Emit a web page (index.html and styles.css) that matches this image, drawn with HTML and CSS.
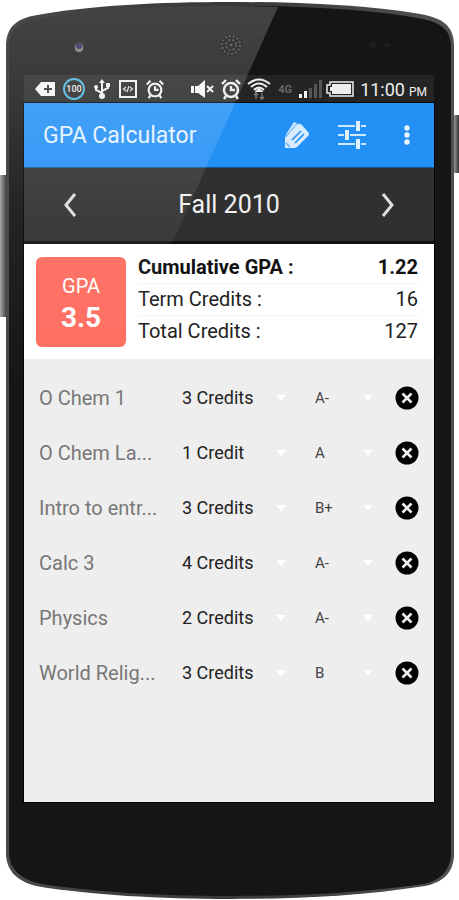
FILE: index.html
```html
<!DOCTYPE html>
<html lang="en">
<head>
    <meta charset="UTF-8">
    <meta name="viewport" content="width=device-width, initial-scale=1.0">
    <title>GPA Calculator</title>
    <link rel="stylesheet" href="styles.css">
</head>
<body>
    <!-- Shared icons -->
    <svg class="sprite" aria-hidden="true">
        <symbol id="alarm" viewBox="0 0 22 22">
            <g fill="none" stroke="#eee" stroke-width="2.400">
                <circle cx="11" cy="12" r="7"/>
                <path d="M11 8v4h4M2 6l4-4M20 6l-4-4M6 18l-2 3M16 18l2 3"/>
            </g>
        </symbol>
        <symbol id="remove" viewBox="0 0 24 24">
            <circle cx="12" cy="12" r="11.500" fill="#000"/>
            <path d="M7.500 7.500l9 9M16.500 7.500l-9 9" stroke="#eee" stroke-width="2.600"/>
        </symbol>
    </svg>

    <div class="phone">
        <svg class="shell" viewBox="0 0 459 900" preserveAspectRatio="none" aria-hidden="true">
            <defs>
                <linearGradient id="key" x1="0" x2="1" y1="0" y2="0">
                    <stop offset="0" stop-color="#aaa"/>
                    <stop offset="0.600" stop-color="#666"/>
                    <stop offset="1" stop-color="#333"/>
                </linearGradient>
                <linearGradient id="rim" x1="0" x2="1" y1="0" y2="0">
                    <stop offset="0" stop-color="#4a4a4a"/>
                    <stop offset="0.500" stop-color="#383838"/>
                    <stop offset="1" stop-color="#505050"/>
                </linearGradient>
            </defs>
            <rect x="0" y="175" width="7" height="142" fill="url(#key)"/>
            <rect x="453" y="115" width="6" height="58" fill="url(#key)"/>
            <path fill="url(#rim)" d="M6 44C7 28 15 20 32 16C90 5 160 2 230 2C300 2 365 5 420 14C443 18 454 26 454 46V856C453 872 444 882 425 886C360 896 300 899 230 899C160 899 90 895 36 886C17 881 7 871 6 855Z"/>
            <path fill="#151515" d="M9 45C10 31 17 24 34 20C90 9 160 6 230 6C300 6 365 9 418 18C440 22 451 29 451 47V855C450 870 441 880 424 884C360 893 300 896 230 896C160 896 90 892 37 883C20 878 10 869 9 854Z"/>
            <circle cx="79" cy="47" r="5" fill="#2c2c2c"/>
            <circle cx="79" cy="48" r="4" fill="#777"/>
            <circle cx="79" cy="46" r="3" fill="#2b2459"/>
            <circle cx="231" cy="45" r="11" fill="#0c0c0c"/>
            <circle cx="231" cy="45" r="9" fill="none" stroke="#444" stroke-width="2" stroke-dasharray="2 2"/>
            <circle cx="231" cy="45" r="5" fill="none" stroke="#444" stroke-width="2" stroke-dasharray="2 2"/>
            <circle cx="231" cy="45" r="1.500" fill="#444"/>
            <circle cx="373" cy="45" r="3.500" fill="#202020"/>
            <circle cx="387" cy="45" r="2.500" fill="#202020"/>
        </svg>

        <div class="status-bar">
            <div class="status-left">
                <svg width="20" height="16" viewBox="0 0 20 16"><path d="M0 8L6 1H20V15H6Z" fill="#f4f4f4"/><path d="M13 4v8M9 8h8" stroke="#333" stroke-width="2"/></svg>
                <span class="ring">100</span>
                <svg width="18" height="20" viewBox="0 0 18 20"><path d="M9 3v14M9 14L3 11V8M9 12l6-3V6" fill="none" stroke="#eee" stroke-width="2"/><path d="M9 0l3 4H6zM13 4h4v4h-4z" fill="#eee"/><circle cx="3" cy="8" r="2" fill="#eee"/><circle cx="9" cy="17" r="3" fill="#eee"/></svg>
                <svg width="18" height="18" viewBox="0 0 18 18"><rect x="1" y="1" width="16" height="16" fill="none" stroke="#eee" stroke-width="2"/><path d="M7 7L4.500 9 7 11M11 7l2.500 2L11 11M10 6l-2 6" fill="none" stroke="#ddd" stroke-width="1.300"/></svg>
                <svg width="20" height="20"><use href="#alarm"/></svg>
            </div>
            <div class="status-right">
                <svg width="24" height="20" viewBox="0 0 24 20"><path d="M0 7h3v7H0zM4 7h3l7-6v18l-7-5H4z" fill="#f4f4f4"/><path d="M16 7l6 6M22 7l-6 6" stroke="#f4f4f4" stroke-width="2"/></svg>
                <svg width="24" height="22"><use href="#alarm"/></svg>
                <svg width="24" height="22" viewBox="0 0 24 22"><g fill="none" stroke="#eee" stroke-width="2"><path d="M1 6Q12-3 23 6M4 9Q12 2 20 9M7 12Q12 7 17 12"/><path d="M12 11l-2 2h4z"/></g><path d="M9 15v6M7 17l2-2 2 2M15 15v6M13 19l2 2 2-2" fill="none" stroke="#777" stroke-width="1.500"/></svg>
                <span class="network">4G</span>
                <svg width="23" height="18" viewBox="0 0 23 18"><path d="M0 14h3v4H0zM5 11h3v7H5z" fill="#f4f4f4"/><path d="M10 8h3v10h-3zM15 4h3v14h-3zM20 0h3v18h-3z" fill="#555"/></svg>
                <svg width="28" height="16" viewBox="0 0 28 16"><path d="M4 1h23v14H4v-3H1V4h3z" fill="none" stroke="#eee" stroke-width="1.500"/><path d="M6 3h19v10H6v-3H4V6h2z" fill="#eee"/></svg>
                <span class="clock">11:00<small>PM</small></span>
            </div>
        </div>

        <main class="screen">
            <header class="app-bar">
                <h1>GPA Calculator</h1>
                <button type="button" aria-label="Edit">
                    <svg width="26" height="28" viewBox="0 0 26 28"><path d="M1 15L10 1l4 2M1 27V16L14 3q2-1 4 1l6 7q2 2 0 4L13 26q-1 1-3 1z" fill="#d9ecff"/><path d="M8 19l9-9M11 22l9-9" stroke="#2390f6" stroke-width="1.600"/><path d="M2 16L12 3l3 0" fill="none" stroke="#70b7fa" stroke-width="1"/><path d="M2 22l4 4" stroke="#5babf8" stroke-width="1.500"/></svg>
                </button>
                <button type="button" aria-label="Settings">
                    <svg width="28" height="30" viewBox="0 0 28 30"><path d="M0 6h28M0 15h28M0 24h28" stroke="#cfe7ff" stroke-width="2"/><path d="M17 1h6v10h-6zM6 10h6v10H6zM17 19h6v10h-6z" fill="#2390f6"/><path d="M18 1h4v10h-4zM7 10h4v10H7zM18 19h4v10h-4z" fill="#e0f0ff"/></svg>
                </button>
                <button type="button" aria-label="More options">
                    <svg width="6" height="20" viewBox="0 0 6 20" fill="#eaf5ff"><circle cx="3" cy="3" r="2.700"/><circle cx="3" cy="10" r="2.700"/><circle cx="3" cy="17" r="2.700"/></svg>
                </button>
            </header>

            <nav class="term-bar">
                <button type="button" aria-label="Previous term">
                    <svg width="14" height="24" viewBox="0 0 14 24"><path d="M12 1L3 12l9 11" fill="none" stroke="#ddd" stroke-width="3"/></svg>
                </button>
                <h2>Fall 2010</h2>
                <button type="button" aria-label="Next term">
                    <svg width="14" height="24" viewBox="0 0 14 24"><path d="M2 1l9 11-9 11" fill="none" stroke="#ddd" stroke-width="3"/></svg>
                </button>
            </nav>

            <section class="summary">
                <div class="gpa-badge">
                    <span>GPA</span>
                    <strong>3.5</strong>
                </div>
                <dl class="totals">
                    <div class="cumulative"><dt>Cumulative GPA :</dt><dd>1.22</dd></div>
                    <div><dt>Term Credits :</dt><dd>16</dd></div>
                    <div><dt>Total Credits :</dt><dd>127</dd></div>
                </dl>
            </section>

            <ul class="courses">
                <li>
                    <span class="name">O Chem 1</span>
                    <div class="picker credits"><select aria-label="Credits for O Chem 1"><option>3 Credits</option></select></div>
                    <div class="picker grade"><select aria-label="Grade for O Chem 1"><option>A-</option></select></div>
                    <button type="button" aria-label="Remove O Chem 1"><svg width="24" height="24"><use href="#remove"/></svg></button>
                </li>
                <li>
                    <span class="name">O Chem La...</span>
                    <div class="picker credits"><select aria-label="Credits for O Chem La"><option>1 Credit</option></select></div>
                    <div class="picker grade"><select aria-label="Grade for O Chem La"><option>A</option></select></div>
                    <button type="button" aria-label="Remove O Chem La"><svg width="24" height="24"><use href="#remove"/></svg></button>
                </li>
                <li>
                    <span class="name">Intro to entr...</span>
                    <div class="picker credits"><select aria-label="Credits for Intro to entr"><option>3 Credits</option></select></div>
                    <div class="picker grade"><select aria-label="Grade for Intro to entr"><option>B+</option></select></div>
                    <button type="button" aria-label="Remove Intro to entr"><svg width="24" height="24"><use href="#remove"/></svg></button>
                </li>
                <li>
                    <span class="name">Calc 3</span>
                    <div class="picker credits"><select aria-label="Credits for Calc 3"><option>4 Credits</option></select></div>
                    <div class="picker grade"><select aria-label="Grade for Calc 3"><option>A-</option></select></div>
                    <button type="button" aria-label="Remove Calc 3"><svg width="24" height="24"><use href="#remove"/></svg></button>
                </li>
                <li>
                    <span class="name">Physics</span>
                    <div class="picker credits"><select aria-label="Credits for Physics"><option>2 Credits</option></select></div>
                    <div class="picker grade"><select aria-label="Grade for Physics"><option>A-</option></select></div>
                    <button type="button" aria-label="Remove Physics"><svg width="24" height="24"><use href="#remove"/></svg></button>
                </li>
                <li>
                    <span class="name">World Relig...</span>
                    <div class="picker credits"><select aria-label="Credits for World Relig"><option>3 Credits</option></select></div>
                    <div class="picker grade"><select aria-label="Grade for World Relig"><option>B</option></select></div>
                    <button type="button" aria-label="Remove World Relig"><svg width="24" height="24"><use href="#remove"/></svg></button>
                </li>
            </ul>
        </main>

        <!-- Reflection across the glass -->
        <svg class="glare" viewBox="0 0 459 900" preserveAspectRatio="none" aria-hidden="true">
            <defs>
                <linearGradient id="shine" gradientUnits="userSpaceOnUse" x1="0" x2="0" y1="0" y2="400">
                    <stop offset="0" stop-color="#fff" stop-opacity="0.200"/>
                    <stop offset="0.200" stop-color="#fff" stop-opacity="0.160"/>
                    <stop offset="0.550" stop-color="#fff" stop-opacity="0.060"/>
                    <stop offset="1" stop-color="#fff" stop-opacity="0"/>
                </linearGradient>
            </defs>
            <path fill="url(#shine)" d="M9 45C10 31 17 24 34 20C90 9 160 6 230 6L278 7L102 400H9Z"/>
        </svg>
    </div>
</body>
</html>
```
FILE: styles.css
```css
* {
    box-sizing: border-box;
}

body {
    margin: 0;
    background: #fff;
    font-family: Roboto, "Liberation Sans", sans-serif;
    color: #222;
}

h1, h2, dl, dd, ul {
    margin: 0;
    padding: 0;
}

svg {
    display: block;
    flex-shrink: 0;
}

button {
    display: flex;
    padding: 0;
    border: none;
    background: none;
    cursor: pointer;
}

.sprite {
    position: absolute;
    width: 0;
    height: 0;
}

.phone {
    position: relative;
    display: flex;
    flex-direction: column;
    min-height: 100vh;
    padding: 75px 25px 98px 24px;
}

.shell, .glare {
    position: absolute;
    top: 0;
    left: 0;
    width: 100%;
    height: 100%;
}

.shell {
    z-index: -1;
}

.glare {
    pointer-events: none;
}

/* Status bar */
.status-bar {
    display: flex;
    justify-content: space-between;
    align-items: center;
    height: 28px;
    padding: 0 7px 0 11px;
    background: #242424;
    color: #eee;
}

.status-left, .status-right {
    display: flex;
    align-items: center;
}

.status-left {
    gap: 8px;
}

.status-right {
    gap: 4px;
}

.ring {
    width: 22px;
    height: 22px;
    border: 2px solid #4ab4dc;
    border-radius: 50%;
    font-size: 9px;
    font-weight: 500;
    line-height: 18px;
    text-align: center;
}

.network {
    width: 20px;
    color: #666;
    font-size: 11px;
    font-weight: 700;
    text-align: center;
}

.clock {
    margin-left: 2px;
    font-size: 18px;
    font-weight: 400;
    white-space: nowrap;
}

.clock small {
    margin-left: 4px;
    font-size: 12px;
}

/* Screen */
.screen {
    flex: 1;
    background: #eee;
    outline: 1px solid #000;
}

.app-bar {
    display: flex;
    align-items: center;
    gap: 28px;
    height: 65px;
    padding: 0 24px 0 19px;
    border-bottom: 1px solid #16568f;
    background: #2390f6;
}

.app-bar h1 {
    flex: 1;
    color: #e4f2ff;
    font-size: 23px;
    font-weight: 400;
}

.app-bar button:last-child {
    margin-left: 10px;
}

.term-bar {
    display: flex;
    justify-content: space-between;
    align-items: center;
    height: 76px;
    padding: 0 39px;
    border-bottom: 3px solid #111;
    background: #303030;
}

.term-bar h2 {
    color: #f2f2f2;
    font-size: 25px;
    font-weight: 400;
}

.summary {
    display: flex;
    align-items: flex-end;
    gap: 12px;
    padding: 8px 16px 12px 12px;
    background: #fff;
}

.gpa-badge {
    display: flex;
    flex-direction: column;
    justify-content: center;
    align-items: center;
    gap: 4px;
    width: 90px;
    height: 90px;
    border-radius: 6px;
    background: #ff6d60;
    color: #fff;
    font-size: 20px;
    line-height: 28px;
}

.gpa-badge strong {
    font-size: 28px;
}

.totals {
    flex: 1;
    font-size: 20px;
    line-height: 31px;
}

.totals div {
    display: flex;
    justify-content: space-between;
    border-bottom: 1px solid #f4f4f4;
}

.totals div:last-child {
    border-bottom: none;
}

.cumulative {
    color: #111;
    font-weight: 700;
}

/* Courses */
.courses {
    padding: 11px 15px 12px;
    list-style: none;
}

.courses li {
    display: grid;
    grid-template-columns: 1fr 133px 80px 24px;
    align-items: center;
    height: 55px;
}

.name {
    color: #777;
    font-size: 20px;
    white-space: nowrap;
}

.picker {
    display: flex;
    align-items: center;
}

.picker::after {
    content: "";
    border: 5px solid transparent;
    border-top: 6px solid #fff;
    border-bottom: none;
}

.picker select {
    appearance: none;
    margin: 0;
    padding: 0;
    border: none;
    background: none;
    color: #222;
    font-family: inherit;
    font-size: 18px;
}

.credits select {
    width: 94px;
}

.grade select {
    width: 48px;
    color: #444;
    font-size: 15px;
}
```
